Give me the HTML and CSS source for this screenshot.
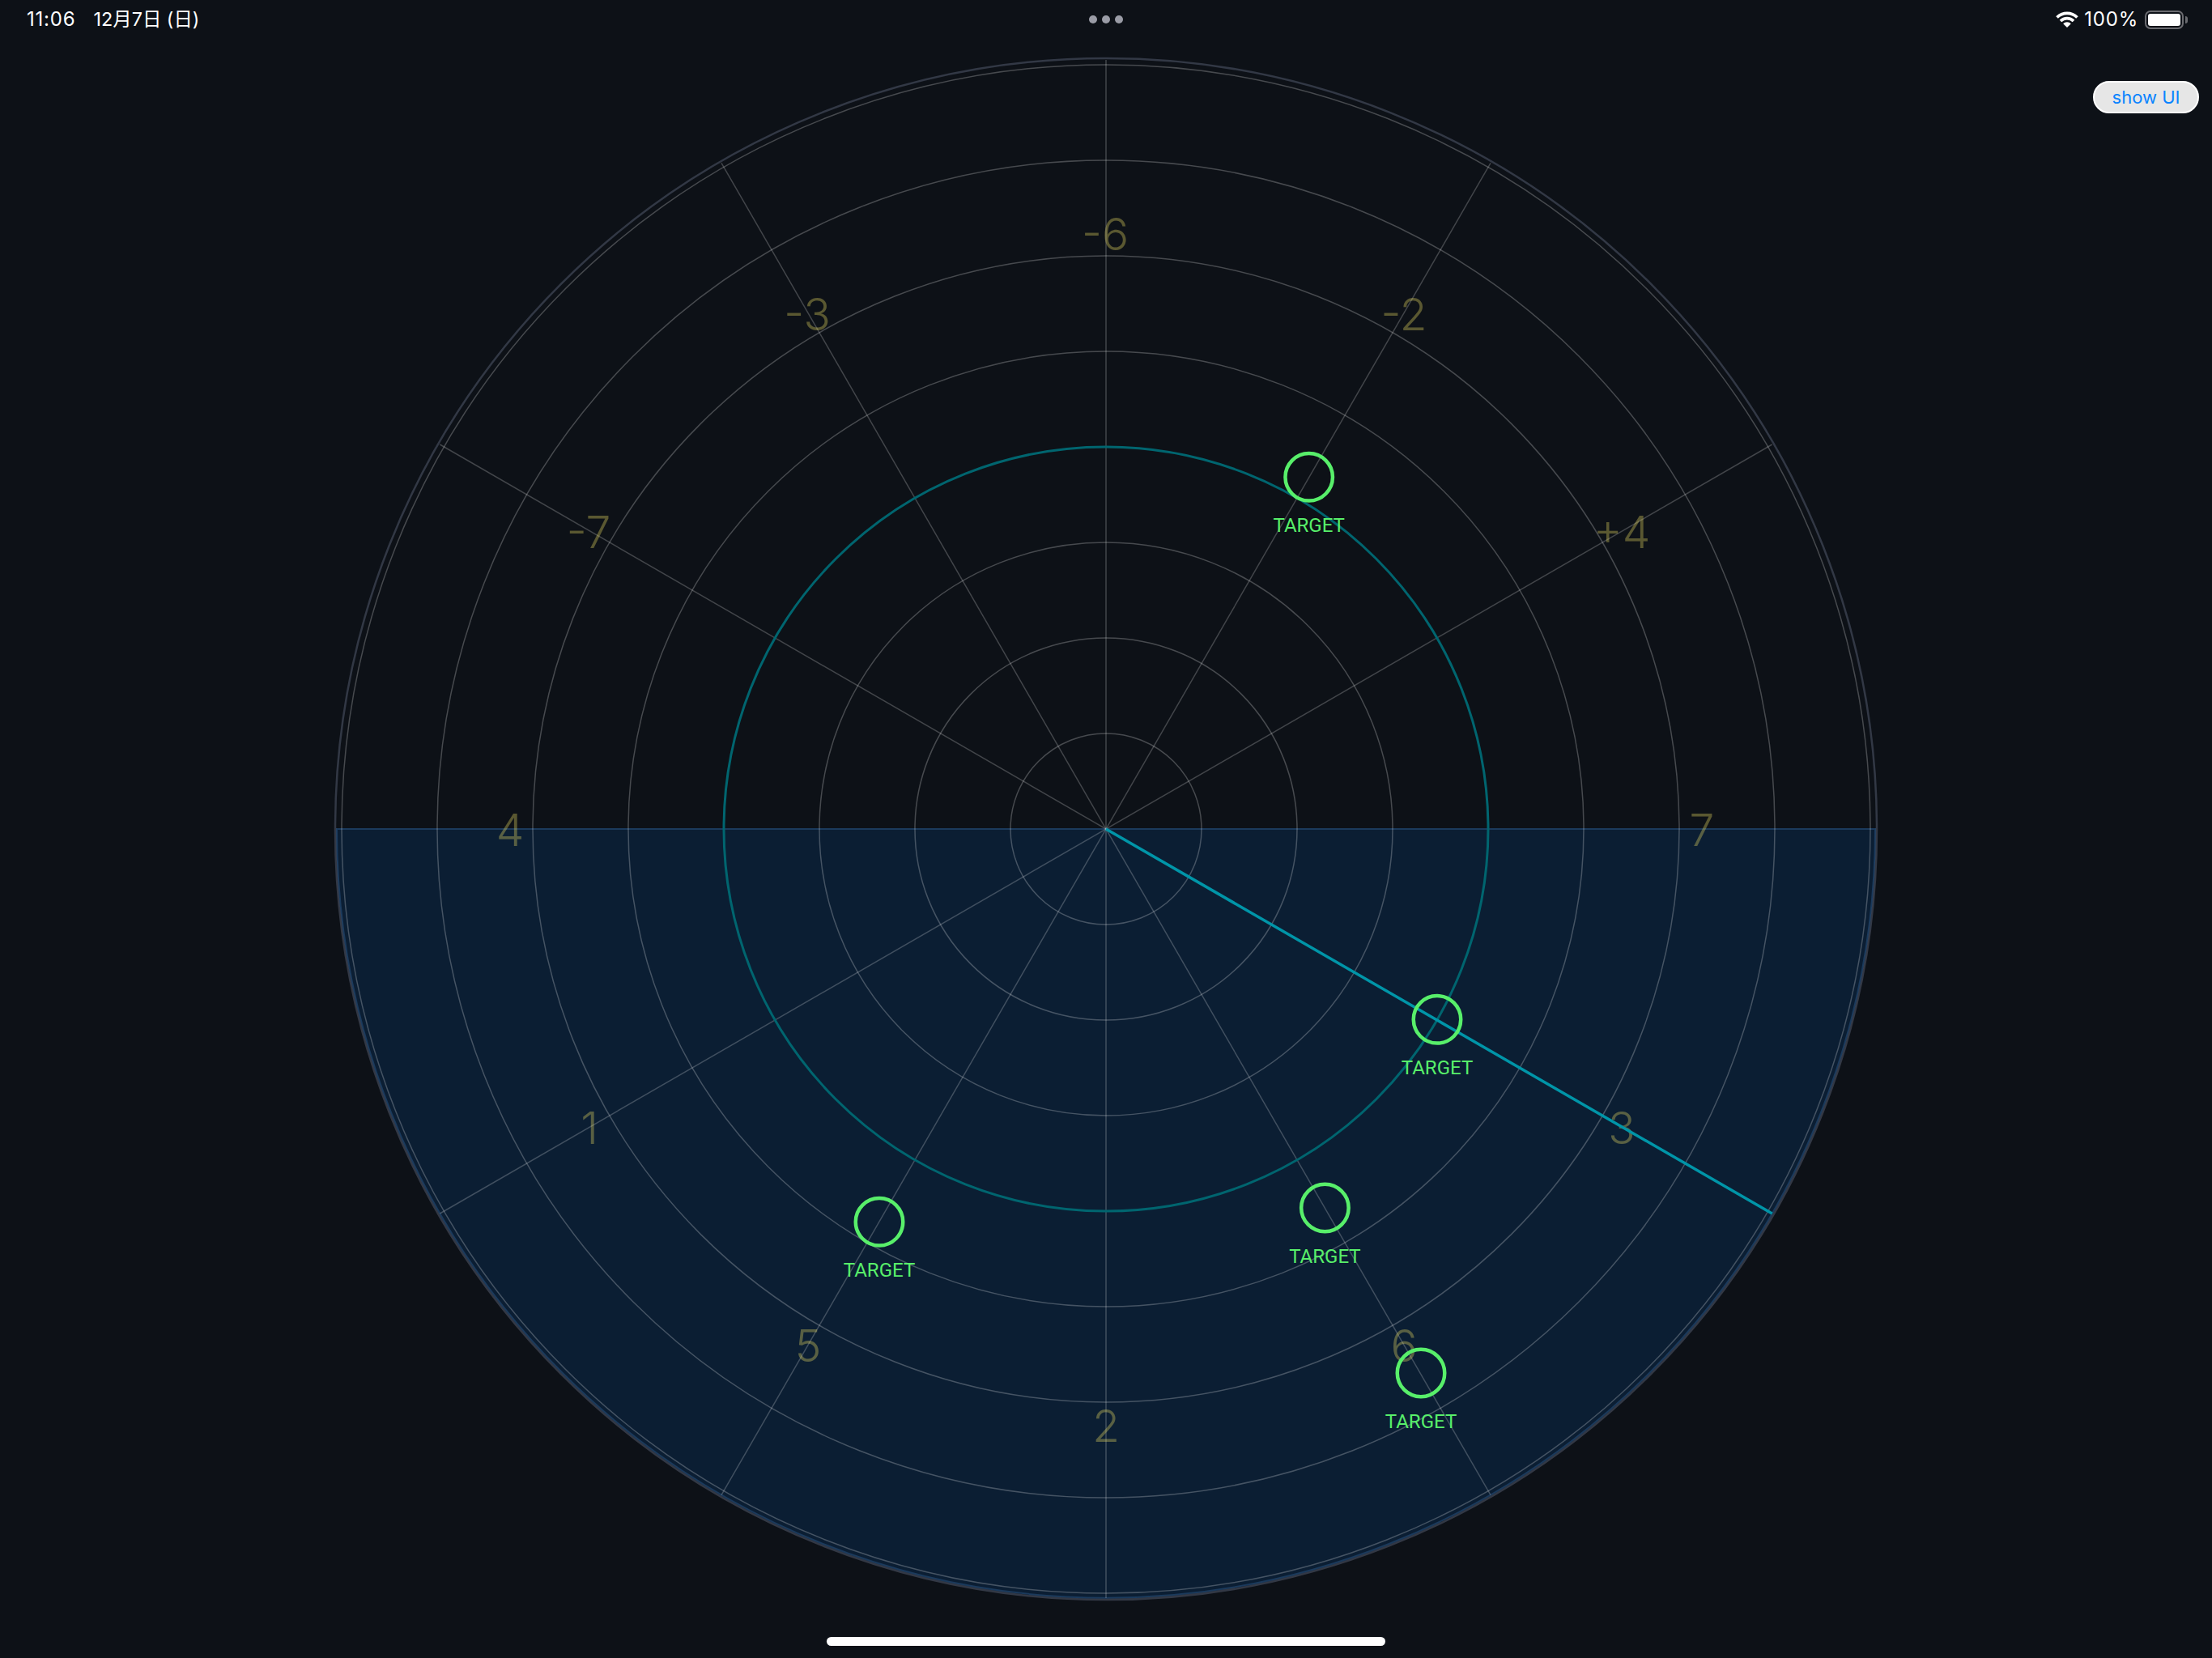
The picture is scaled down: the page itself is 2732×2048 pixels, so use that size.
FILE: index.html
```html
<!DOCTYPE html>
<html lang="en">
<head>
  <meta charset="UTF-8" />
  <title>Radar</title>
  <link rel="stylesheet" href="styles.css">
</head>
<body>

  <div class="status-bar">
    <div class="status-left">
      <span class="status-num">11:06</span>
      <span class="status-date">12月7日 (日)</span>
    </div>
    <div class="status-dots">
      <span class="dot"></span>
      <span class="dot"></span>
      <span class="dot"></span>
    </div>
    <div class="status-right">
      <svg class="wifi" viewBox="0 0 28 19">
        <path d="M14 19 9.4 14.4A6.5 6.5 0 0 1 18.6 14.4Z" />
        <path class="wifi-arc" d="M6.4 11.4A10.75 10.75 0 0 1 21.6 11.4" />
        <path class="wifi-arc" d="M2.16 7.16A16.75 16.75 0 0 1 25.84 7.16" />
      </svg>
      <span class="status-num">100%</span>
      <div class="battery">
        <div class="battery-level"></div>
      </div>
      <div class="battery-nub"></div>
    </div>
  </div>

  <button class="show-ui">show UI</button>

  <!-- origin of the viewBox is the centre of the radar -->
  <svg class="radar" viewBox="-960 -960 1920 1920">
    <path class="half" d="M-950 0H950A950 950 0 0 1 -950 0Z" />

    <circle class="ring-outer" r="952" />
    <circle class="ring" r="118" />
    <circle class="ring" r="236" />
    <circle class="ring" r="354" />
    <circle class="ring" r="590" />
    <circle class="ring" r="708" />
    <circle class="ring" r="826" />
    <circle class="ring" r="944" />

    <line class="spoke" x1="0" y1="-950" x2="0" y2="950" />
    <line class="spoke" x1="475" y1="-822.7" x2="-475" y2="822.7" />
    <line class="spoke" x1="822.7" y1="-475" x2="-822.7" y2="475" />
    <line class="spoke" x1="-822.7" y1="-475" x2="0" y2="0" />
    <line class="spoke" x1="-475" y1="-822.7" x2="475" y2="822.7" />

    <circle class="ring-active" r="472" />

    <text class="scale" x="-1" y="-715">-6</text>
    <text class="scale" x="368" y="-616">-2</text>
    <text class="scale" x="637" y="-347">+4</text>
    <text class="scale" x="736" y="21">7</text>
    <text class="scale" x="637" y="389">3</text>
    <text class="scale" x="368" y="658">6</text>
    <text class="scale" x="0" y="757">2</text>
    <text class="scale" x="-368" y="658">5</text>
    <text class="scale" x="-638" y="389">1</text>
    <text class="scale" x="-736" y="21">4</text>
    <text class="scale" x="-639" y="-347">-7</text>
    <text class="scale" x="-369" y="-616">-3</text>

    <line class="hand" x1="0" y1="0" x2="822.7" y2="475" />

    <g class="target" transform="translate(250.7 -434.7)">
      <circle r="29.25" />
      <text y="67.5">TARGET</text>
    </g>
    <g class="target" transform="translate(409 235.3)">
      <circle r="29.25" />
      <text y="67.5">TARGET</text>
    </g>
    <g class="target" transform="translate(270.4 468)">
      <circle r="29.25" />
      <text y="67.5">TARGET</text>
    </g>
    <g class="target" transform="translate(-280 485.3)">
      <circle r="29.25" />
      <text y="67.5">TARGET</text>
    </g>
    <g class="target" transform="translate(389 672)">
      <circle r="29.25" />
      <text y="67.5">TARGET</text>
    </g>
  </svg>

  <div class="home-bar"></div>

</body>
</html>
```

FILE: styles.css
```css
html, body {
  margin: 0;
  padding: 0;
}
body {
  position: relative;
  width: 2732px;
  height: 2048px;
  overflow: hidden;
  background-color: #0d1117;
  color: #ffffff;
  font-family: Inter, "Noto Sans CJK JP", sans-serif;
}
.status-bar {
  display: grid;
  grid-template-columns: 1fr auto 1fr;
  align-items: center;
  height: 48px;
  padding: 0 30px;
  margin-bottom: 16px;
  font-size: 24px;
  line-height: 24px;
}
.status-left {
  display: flex;
  align-items: baseline;
  gap: 22px;
  margin-left: 3px;
}
.status-num {
  letter-spacing: 0.8px;
}
.status-date {
  font-size: 23.4px;
}
.status-dots {
  display: flex;
  gap: 6px;
}
.dot {
  width: 10px;
  height: 10px;
  border-radius: 50%;
  background-color: #9a9ca6;
}
.status-right {
  display: flex;
  align-items: center;
  justify-content: flex-end;
}
.wifi {
  width: 30px;
  height: 20px;
  margin-right: 6px;
  fill: #ffffff;
}
.wifi-arc {
  fill: none;
  stroke: #ffffff;
  stroke-width: 3.5;
}
.battery {
  box-sizing: border-box;
  width: 48px;
  height: 23px;
  margin-left: 8px;
  padding: 2px;
  border: 2px solid #6a6b70;
  border-radius: 7px;
}
.battery-level {
  height: 100%;
  border-radius: 3px;
  background-color: #ffffff;
}
.battery-nub {
  width: 3px;
  height: 9px;
  margin-left: 2px;
  border-radius: 0 3px 3px 0;
  background-color: #6a6b70;
}
.show-ui {
  position: absolute;
  top: 100px;
  right: 16px;
  box-sizing: border-box;
  width: 131px;
  height: 40px;
  padding: 0;
  border: 2px solid #ffffff;
  border-radius: 20px;
  background-color: #e6e6e6;
  color: #0a84ff;
  font-family: inherit;
  font-size: 22px;
}
.radar {
  display: block;
  width: 1920px;
  height: 1920px;
  margin: 0 auto;
}
.half {
  fill: #0b1e33;
  stroke: #1b3a5c;
  stroke-width: 2;
}
.ring-outer {
  fill: none;
  stroke: rgba(200, 215, 255, 0.2);
  stroke-width: 2.5;
}
.ring {
  fill: none;
  stroke: rgba(255, 255, 255, 0.24);
  stroke-width: 1.5;
}
.ring-active {
  fill: none;
  stroke: #00656f;
  stroke-width: 3;
}
.spoke {
  stroke: rgba(255, 255, 255, 0.22);
  stroke-width: 1.5;
}
.scale {
  fill: rgba(240, 225, 100, 0.34);
  font-size: 55px;
  font-weight: 350;
  text-anchor: middle;
}
.hand {
  stroke: #0095a8;
  stroke-width: 3.5;
}
.target circle {
  fill: none;
  stroke: #58ef6a;
  stroke-width: 4.5;
}
.target text {
  fill: #58ef6a;
  font-family: Roboto, sans-serif;
  font-size: 24px;
  text-anchor: middle;
}
.home-bar {
  position: absolute;
  left: 1021px;
  top: 2022px;
  width: 690px;
  height: 11px;
  border-radius: 6px;
  background-color: #ffffff;
}
```
